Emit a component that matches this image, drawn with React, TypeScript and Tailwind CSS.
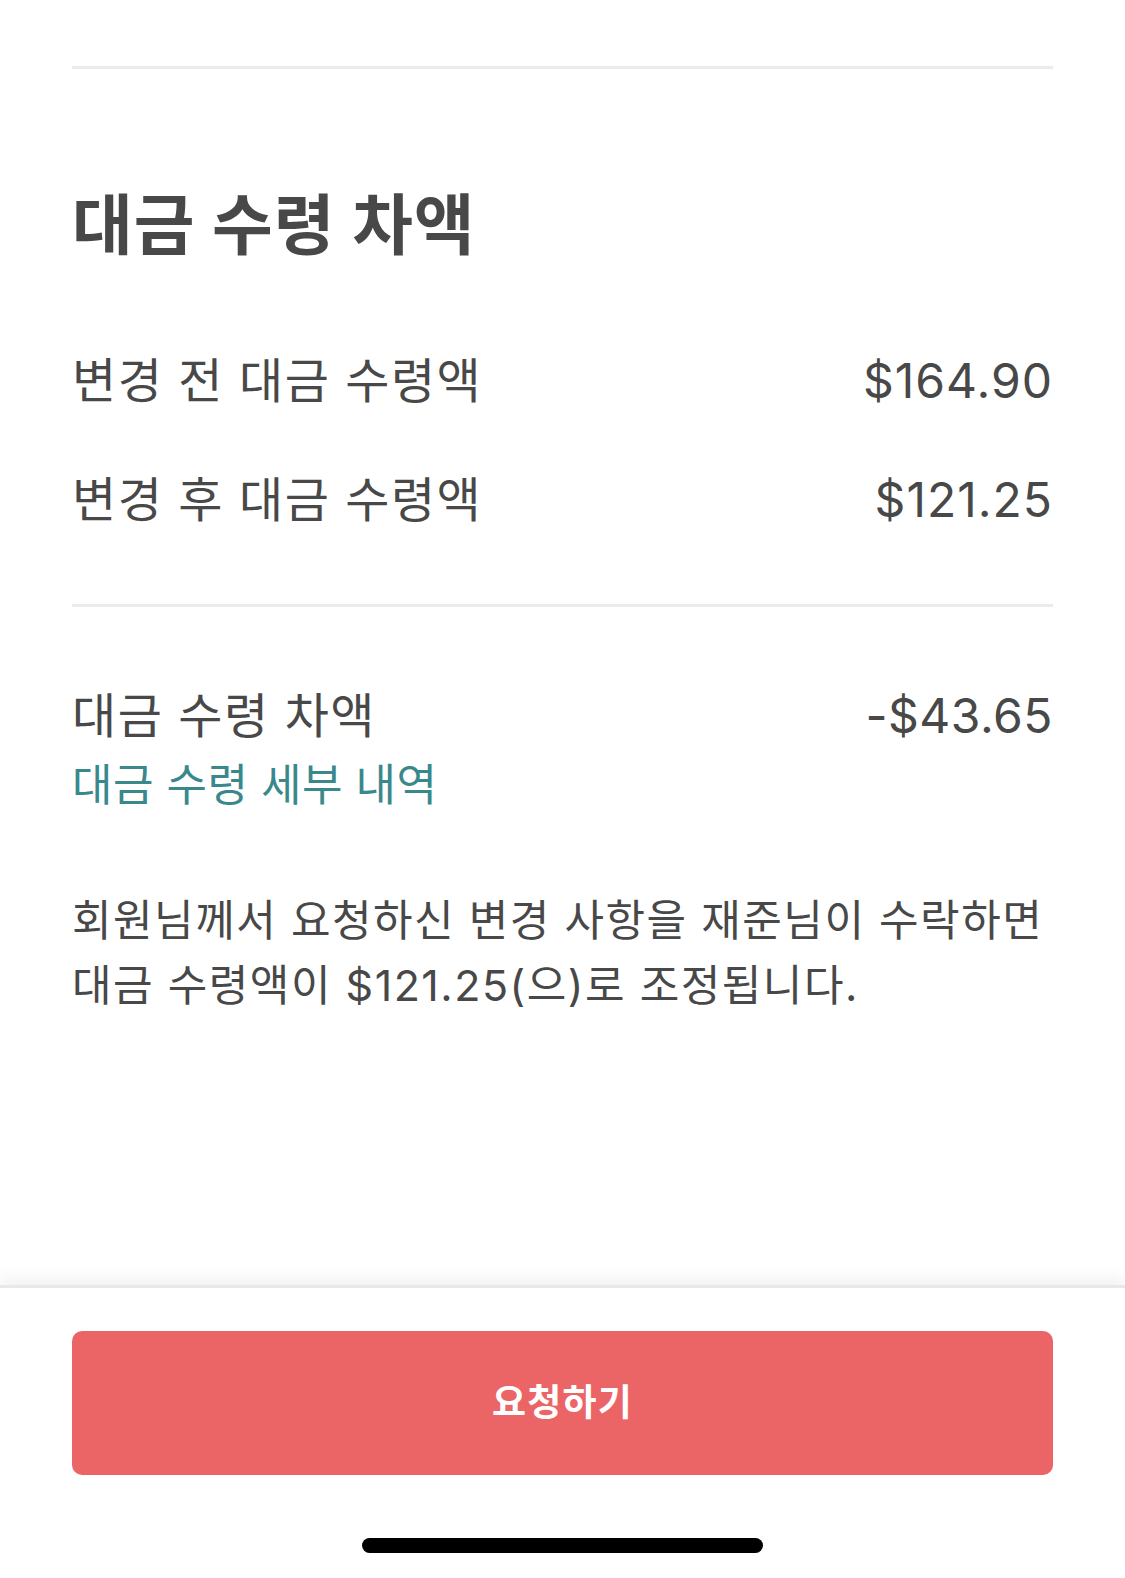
export default function App() {
    const rows = [
        { label: "변경 전 대금 수령액", amount: "$164.90" },
        { label: "변경 후 대금 수령액", amount: "$121.25" },
    ];

    return (
        <div
            className="min-h-[1578px] w-full flex flex-col bg-white text-[#484848]"
            style={{ fontFamily: 'Inter, "Noto Sans CJK KR", sans-serif' }}
        >
            {/* Content */}
            <main className="flex-1 px-[72px] pt-[66px]">
                <div className="h-[3px] bg-[#ebebeb]" />

                <h1 className="mt-[116px] text-[66px] leading-[80px] font-bold tracking-[1px]">
                    대금 수령 차액
                </h1>

                <div className="mt-[86px] flex flex-col gap-[59px]">
                    {rows.map((row) => (
                        <div key={row.label} className="flex items-center justify-between text-[48px] leading-[60px]">
                            <span className="tracking-[1.5px]">{row.label}</span>
                            <span className="tracking-[1px]">{row.amount}</span>
                        </div>
                    ))}
                </div>

                <div className="mt-[74px] h-[3px] bg-[#ebebeb]" />

                <div className="mt-[79px] flex items-start justify-between">
                    <div className="flex flex-col">
                        <span className="text-[48px] leading-[60px] tracking-[1.5px]">대금 수령 차액</span>
                        <a href="#" className="mt-[11px] text-[44px] leading-[56px] tracking-[0.4px] text-[#39888b]">
                            대금 수령 세부 내역
                        </a>
                    </div>
                    <span className="text-[48px] leading-[60px] tracking-[0.5px]">-$43.65</span>
                </div>

                <p className="mt-[75px] text-[43px] leading-[65px] tracking-[1.5px]">
                    회원님께서 요청하신 변경 사항을 재준님이 수락하면
                    <br />
                    대금 수령액이 $121.25(으)로 조정됩니다.
                </p>
            </main>

            {/* Footer */}
            <footer className="h-[293px] bg-white border-t-[3px] border-[#e8e8e8] shadow-[0_-8px_14px_rgba(0,0,0,0.05)] px-[72px] pt-[43px] flex flex-col items-center">
                <button className="w-full h-[144px] rounded-[10px] bg-[#eb6567] text-white text-[37px] font-semibold tracking-[1.2px]">
                    요청하기
                </button>
                <div className="mt-[63px] w-[401px] h-[15px] rounded-full bg-black" />
            </footer>
        </div>
    );
}
